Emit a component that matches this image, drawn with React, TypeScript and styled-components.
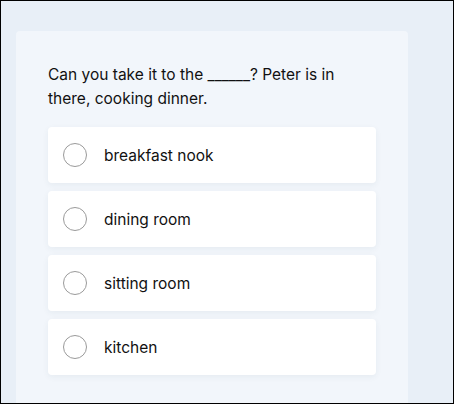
import React from "react";
import styled, { createGlobalStyle } from "styled-components";

const Global = createGlobalStyle`
  html, body { margin: 0; padding: 0; }
  body { font-family: Inter, "Liberation Sans", Arial, sans-serif; }
  * { box-sizing: border-box; }
`;

const Frame = styled.div`
  width: 454px;
  height: 404px;
  border: 1px solid #000;
  background: #e8eff7;
  overflow: hidden;
  padding: 30px 45px 0 15px;
`;

const Card = styled.section`
  background: #f2f6fb;
  border-radius: 4px;
  height: 400px;
  padding: 32px 32px;
  display: flex;
  flex-direction: column;
  gap: 16px;
`;

const Question = styled.p`
  margin: 0;
  font-size: 15.5px;
  line-height: 24px;
  color: #111;
`;

const Options = styled.div`
  display: flex;
  flex-direction: column;
  gap: 8px;
`;

const Option = styled.label`
  display: flex;
  align-items: center;
  height: 56px;
  padding: 0 15px;
  gap: 17px;
  background: #fff;
  border-radius: 4px;
  box-shadow: 0 2px 6px rgba(40, 60, 90, 0.06);
  font-size: 15.5px;
  color: #111;
`;

const Radio = styled.span`
  width: 24px;
  height: 24px;
  border-radius: 50%;
  border: 1px solid #9a9a9a;
  flex: none;
`;

const options = ["breakfast nook", "dining room", "sitting room", "kitchen"];

export default function App() {
  return (
    <>
      <Global />
      <Frame>
        <Card>
          <Question>
            Can you take it to the ______? Peter is in there, cooking dinner.
          </Question>
          <Options>
            {options.map((o) => (
              <Option key={o}>
                <Radio />
                {o}
              </Option>
            ))}
          </Options>
        </Card>
      </Frame>
    </>
  );
}
